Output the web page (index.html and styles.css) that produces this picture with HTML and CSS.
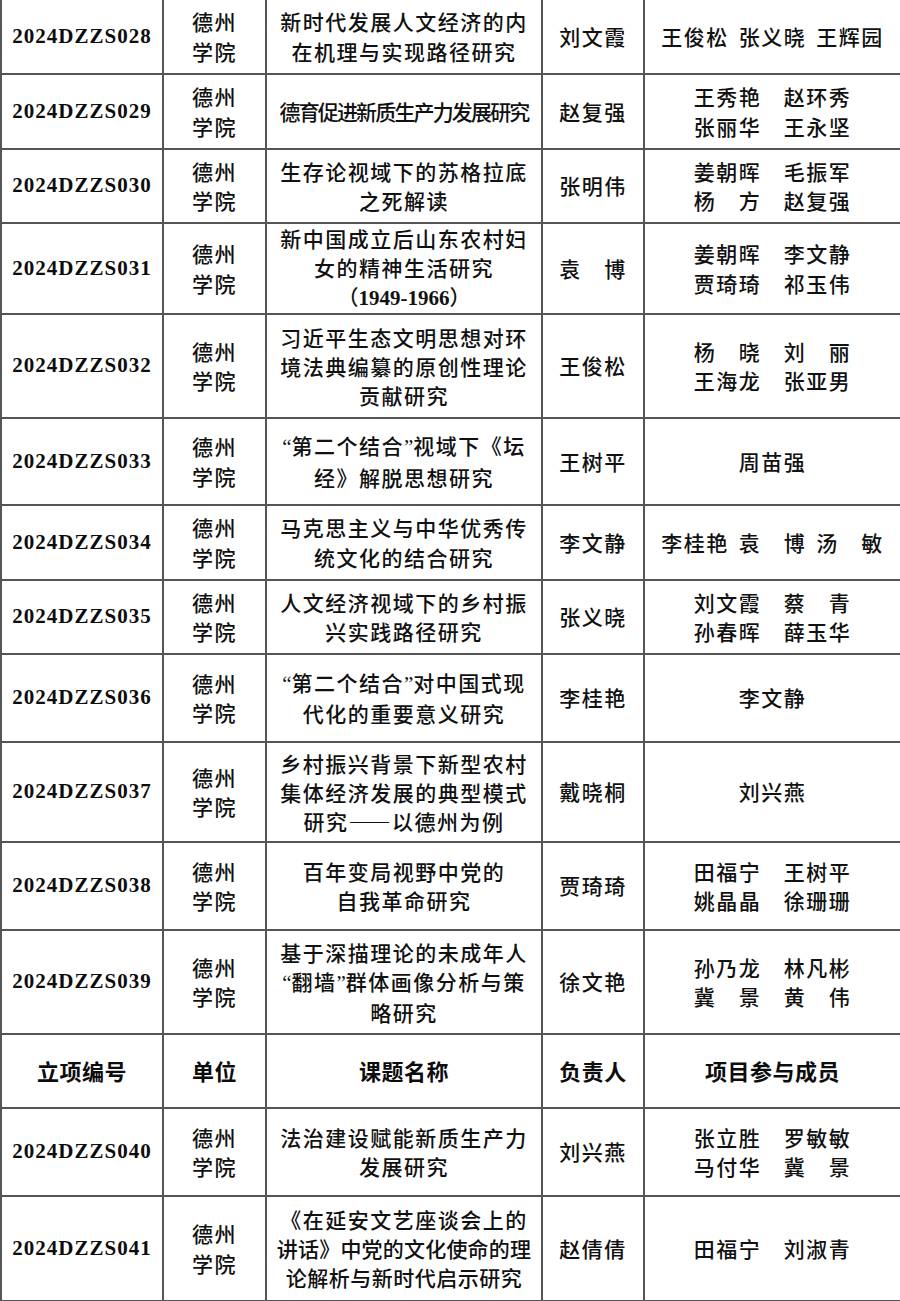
FILE: index.html
```html
<!DOCTYPE html>
<html lang="zh-CN">
<head>
<meta charset="utf-8">
<title>立项名单</title>
<link rel="stylesheet" href="styles.css">
</head>
<body>
<table class="tbl">
  <colgroup>
    <col class="c1"><col class="c2"><col class="c3"><col class="c4"><col class="c5">
  </colgroup>
  <tbody>
    <tr class="r74">
      <td class="id">2024DZZS028</td>
      <td>德州<br>学院</td>
      <td>新时代发展人文经济的内<br>在机理与实现路径研究</td>
      <td>刘文霞</td>
      <td>王俊松<span class="hs"></span>张义晓<span class="hs"></span>王辉园</td>
    </tr>
    <tr class="r75">
      <td class="id">2024DZZS029</td>
      <td>德州<br>学院</td>
      <td><span class="tight">德育促进新质生产力发展研究</span></td>
      <td>赵复强</td>
      <td>王秀艳　赵环秀<br>张丽华　王永坚</td>
    </tr>
    <tr class="r74">
      <td class="id">2024DZZS030</td>
      <td>德州<br>学院</td>
      <td>生存论视域下的苏格拉底<br>之死解读</td>
      <td>张明伟</td>
      <td>姜朝晖　毛振军<br>杨　方　赵复强</td>
    </tr>
    <tr class="r89">
      <td class="id">2024DZZS031</td>
      <td>德州<br>学院</td>
      <td class="l29">新中国成立后山东农村妇<br>女的精神生活研究<br><span class="par">（<span class="num">1949-1966</span>）</span></td>
      <td>袁　博</td>
      <td>姜朝晖　李文静<br>贾琦琦　祁玉伟</td>
    </tr>
    <tr class="r104">
      <td class="id">2024DZZS032</td>
      <td>德州<br>学院</td>
      <td class="l29">习近平生态文明思想对环<br>境法典编纂的原创性理论<br>贡献研究</td>
      <td>王俊松</td>
      <td>杨　晓　刘　丽<br>王海龙　张亚男</td>
    </tr>
    <tr class="r87">
      <td class="id">2024DZZS033</td>
      <td>德州<br>学院</td>
      <td><span class="q">“</span>第二个结合<span class="q">”</span>视域下《坛<br>经》解脱思想研究</td>
      <td>王树平</td>
      <td>周苗强</td>
    </tr>
    <tr class="r75">
      <td class="id">2024DZZS034</td>
      <td>德州<br>学院</td>
      <td>马克思主义与中华优秀传<br>统文化的结合研究</td>
      <td>李文静</td>
      <td>李桂艳<span class="hs"></span>袁　博<span class="hs"></span>汤　敏</td>
    </tr>
    <tr class="r74">
      <td class="id">2024DZZS035</td>
      <td>德州<br>学院</td>
      <td>人文经济视域下的乡村振<br>兴实践路径研究</td>
      <td>张义晓</td>
      <td>刘文霞　蔡　青<br>孙春晖　薛玉华</td>
    </tr>
    <tr class="r88">
      <td class="id">2024DZZS036</td>
      <td>德州<br>学院</td>
      <td><span class="q">“</span>第二个结合<span class="q">”</span>对中国式现<br>代化的重要意义研究</td>
      <td>李桂艳</td>
      <td>李文静</td>
    </tr>
    <tr class="r100">
      <td class="id">2024DZZS037</td>
      <td>德州<br>学院</td>
      <td class="l29">乡村振兴背景下新型农村<br>集体经济发展的典型模式<br>研究——以德州为例</td>
      <td>戴晓桐</td>
      <td>刘兴燕</td>
    </tr>
    <tr class="r88">
      <td class="id">2024DZZS038</td>
      <td>德州<br>学院</td>
      <td>百年变局视野中党的<br>自我革命研究</td>
      <td>贾琦琦</td>
      <td>田福宁　王树平<br>姚晶晶　徐珊珊</td>
    </tr>
    <tr class="r104">
      <td class="id">2024DZZS039</td>
      <td>德州<br>学院</td>
      <td class="l29">基于深描理论的未成年人<br><span class="q">“</span>翻墙<span class="q">”</span>群体画像分析与策<br>略研究</td>
      <td>徐文艳</td>
      <td>孙乃龙　林凡彬<br>冀　景　黄　伟</td>
    </tr>
    <tr class="r74 hd">
      <td>立项编号</td>
      <td>单位</td>
      <td>课题名称</td>
      <td>负责人</td>
      <td>项目参与成员</td>
    </tr>
    <tr class="r88">
      <td class="id">2024DZZS040</td>
      <td>德州<br>学院</td>
      <td>法治建设赋能新质生产力<br>发展研究</td>
      <td>刘兴燕</td>
      <td>张立胜　罗敏敏<br>马付华　冀　景</td>
    </tr>
    <tr class="r105">
      <td class="id">2024DZZS041</td>
      <td>德州<br>学院</td>
      <td class="l29">《在延安文艺座谈会上的<br><span class="snug">讲话》中党的文化使命的理</span><br><span class="snug2">论解析与新时代启示研究</span></td>
      <td>赵倩倩</td>
      <td>田福宁　刘淑青</td>
    </tr>
  </tbody>
</table>
</body>
</html>
```

FILE: styles.css
```css
html, body {
  margin: 0;
  padding: 0;
  background: #ffffff;
}

.tbl {
  border-collapse: collapse;
  table-layout: fixed;
  width: 900px;
  font-family: "Noto Sans CJK SC", "Noto Sans", sans-serif;
  font-size: 21px;
  font-weight: 500;
  color: #111111;
}

.c1 { width: 162px; }
.c2 { width: 103px; }
.c3 { width: 276px; }
.c4 { width: 102px; }
.c5 { width: 257px; }

.tbl td {
  border: 2px solid #555555;
  padding: 0;
  text-align: center;
  vertical-align: middle;
  line-height: 29.5px;
  letter-spacing: 1.5px;
  white-space: nowrap;
  overflow: hidden;
}

.tbl td.l29 {
  line-height: 29px;
}

.tbl tr:first-child td {
  border-top: none;
}

.r74 { height: 74px; }
.r75 { height: 75px; }
.r87 { height: 87px; }
.r88 { height: 88px; }
.r89 { height: 89px; }
.r100 { height: 100px; }
.r104 { height: 104px; }
.r105 { height: 105px; }

.tbl td.id {
  font-family: "Liberation Serif", "Times New Roman", serif;
  font-weight: bold;
  font-size: 21px;
  letter-spacing: 1px;
  color: #0d0d0d;
}

.hd td {
  font-weight: bold;
  font-size: 22px;
  letter-spacing: 0.5px;
  color: #0d0d0d;
}

.tight {
  letter-spacing: -1.85px;
}

.snug {
  letter-spacing: 0.2px;
}

.snug2 {
  letter-spacing: 0.5px;
}

.q {
  font-family: "Liberation Serif", serif;
  letter-spacing: 0;
}

.num {
  font-family: "Liberation Serif", serif;
  font-weight: bold;
  letter-spacing: 0;
}

.par {
  letter-spacing: 0;
}

.hs {
  display: inline-block;
  width: 10px;
}
```
